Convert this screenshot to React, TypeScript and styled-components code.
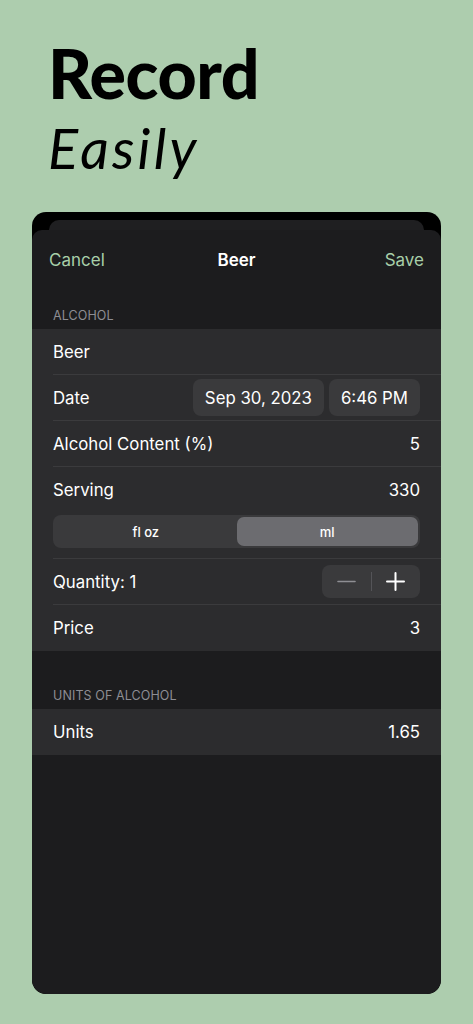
import React from "react";
import styled, { createGlobalStyle } from "styled-components";

const GlobalStyle = createGlobalStyle`
  html, body {
    margin: 0;
    padding: 0;
    background: #adcdae;
  }
  body {
    font-family: Inter, "Liberation Sans", sans-serif;
    -webkit-font-smoothing: antialiased;
  }
`;

const Page = styled.div`
  width: 473px;
  height: 1024px;
  background: #adcdae;
  display: flex;
  flex-direction: column;
  box-sizing: border-box;
  padding-top: 32px;
`;

const Heading = styled.div`
  padding-left: 48px;
  color: #000;
  font-family: Lato, "Noto Sans", sans-serif;
`;

const Bold = styled.div`
  font-size: 68px;
  font-weight: 900;
  line-height: 82px;
  letter-spacing: -0.4px;
`;

const Light = styled.div`
  font-size: 56px;
  font-style: italic;
  font-weight: 400;
  line-height: 67px;
  letter-spacing: 3.2px;
`;

const Frame = styled.div`
  margin: 31px 0 0 32px;
  width: 409px;
  height: 782px;
  background: #000;
  border-radius: 14px;
  overflow: hidden;
  display: flex;
  flex-direction: column;
  padding-top: 8px;
  box-sizing: border-box;
`;

const BackCard = styled.div`
  margin: 0 17px;
  height: 10px;
  background: #1f1f21;
  border-radius: 10px 10px 0 0;
`;

const Sheet = styled.div`
  flex: 1;
  background: #1c1c1e;
  border-radius: 10px 10px 14px 14px;
  display: flex;
  flex-direction: column;
`;

const NavBar = styled.div`
  height: 60px;
  display: flex;
  align-items: center;
  justify-content: space-between;
  padding: 0 17px;
  font-size: 17px;
`;

const NavButton = styled.span<{ $right?: boolean }>`
  color: #a8cfa9;
  width: 80px;
  text-align: ${(p) => (p.$right ? "right" : "left")};
`;

const NavTitle = styled.span`
  color: #fff;
  font-weight: 600;
`;

const SectionHeader = styled.div<{ $top: number }>`
  padding: ${(p) => p.$top}px 21px 6px;
  font-size: 12.5px;
  line-height: 14px;
  color: #8d8d93;
  letter-spacing: 0.1px;
`;

const Group = styled.div`
  background: #2c2c2e;
`;

const Row = styled.div`
  padding-left: 21px;
  &:last-child > div {
    border-bottom: none;
  }
`;

const RowInner = styled.div<{ $column?: boolean }>`
  min-height: 46px;
  box-sizing: border-box;
  padding-right: 21px;
  border-bottom: 0.8px solid #3b3b3d;
  display: flex;
  flex-direction: ${(p) => (p.$column ? "column" : "row")};
  align-items: ${(p) => (p.$column ? "stretch" : "center")};
  justify-content: space-between;
  color: #fff;
  font-size: 16.8px;
  padding-bottom: ${(p) => (p.$column ? "10px" : "0")};
`;

const Line = styled.div`
  height: 46px;
  display: flex;
  align-items: center;
  justify-content: space-between;
`;

const Pills = styled.div`
  display: flex;
  gap: 5px;
`;

const Pill = styled.div`
  height: 37px;
  padding: 0 12px;
  border-radius: 8px;
  background: #3a3a3c;
  display: flex;
  align-items: center;
  color: #fff;
  font-size: 16.8px;
`;

const Segmented = styled.div`
  margin-top: 2px;
  height: 33px;
  border-radius: 8px;
  background: #3a3a3c;
  display: grid;
  grid-template-columns: 1fr 1fr;
  padding: 2px;
  box-sizing: border-box;
`;

const Segment = styled.div<{ $active?: boolean }>`
  border-radius: 7px;
  background: ${(p) => (p.$active ? "#6c6c70" : "transparent")};
  display: flex;
  align-items: center;
  justify-content: center;
  font-size: 13px;
  font-weight: 500;
  color: #fff;
`;

const Stepper = styled.div`
  width: 98px;
  height: 33px;
  border-radius: 8px;
  background: #3a3a3c;
  display: flex;
  align-items: center;
`;

const StepButton = styled.div`
  flex: 1;
  display: flex;
  align-items: center;
  justify-content: center;
`;

const StepDivider = styled.div`
  width: 1px;
  height: 19px;
  background: #545458;
`;

const Minus = () => (
  <svg width="19" height="19" viewBox="0 0 19 19">
    <path d="M1 9.5h17" stroke="#8e8e93" strokeWidth="1.6" strokeLinecap="round" />
  </svg>
);

const Plus = () => (
  <svg width="19" height="19" viewBox="0 0 19 19">
    <path d="M1 9.5h17M9.5 1v17" stroke="#fff" strokeWidth="2" strokeLinecap="round" />
  </svg>
);

const App = () => {
  return (
    <Page>
      <GlobalStyle />
      <Heading>
        <Bold>Record</Bold>
        <Light>Easily</Light>
      </Heading>
      <Frame>
        <BackCard />
        <Sheet>
          <NavBar>
            <NavButton>Cancel</NavButton>
            <NavTitle>Beer</NavTitle>
            <NavButton $right>Save</NavButton>
          </NavBar>
          <SectionHeader $top={19}>ALCOHOL</SectionHeader>
          <Group>
            <Row>
              <RowInner>Beer</RowInner>
            </Row>
            <Row>
              <RowInner>
                <span>Date</span>
                <Pills>
                  <Pill>Sep 30, 2023</Pill>
                  <Pill>6:46 PM</Pill>
                </Pills>
              </RowInner>
            </Row>
            <Row>
              <RowInner>
                <span>Alcohol Content (%)</span>
                <span>5</span>
              </RowInner>
            </Row>
            <Row>
              <RowInner $column>
                <Line>
                  <span>Serving</span>
                  <span>330</span>
                </Line>
                <Segmented>
                  <Segment>fl oz</Segment>
                  <Segment $active>ml</Segment>
                </Segmented>
              </RowInner>
            </Row>
            <Row>
              <RowInner>
                <span>Quantity: 1</span>
                <Stepper>
                  <StepButton>
                    <Minus />
                  </StepButton>
                  <StepDivider />
                  <StepButton>
                    <Plus />
                  </StepButton>
                </Stepper>
              </RowInner>
            </Row>
            <Row>
              <RowInner>
                <span>Price</span>
                <span>3</span>
              </RowInner>
            </Row>
          </Group>
          <SectionHeader $top={38}>UNITS OF ALCOHOL</SectionHeader>
          <Group>
            <Row>
              <RowInner>
                <span>Units</span>
                <span>1.65</span>
              </RowInner>
            </Row>
          </Group>
        </Sheet>
      </Frame>
    </Page>
  );
};

export default App;
